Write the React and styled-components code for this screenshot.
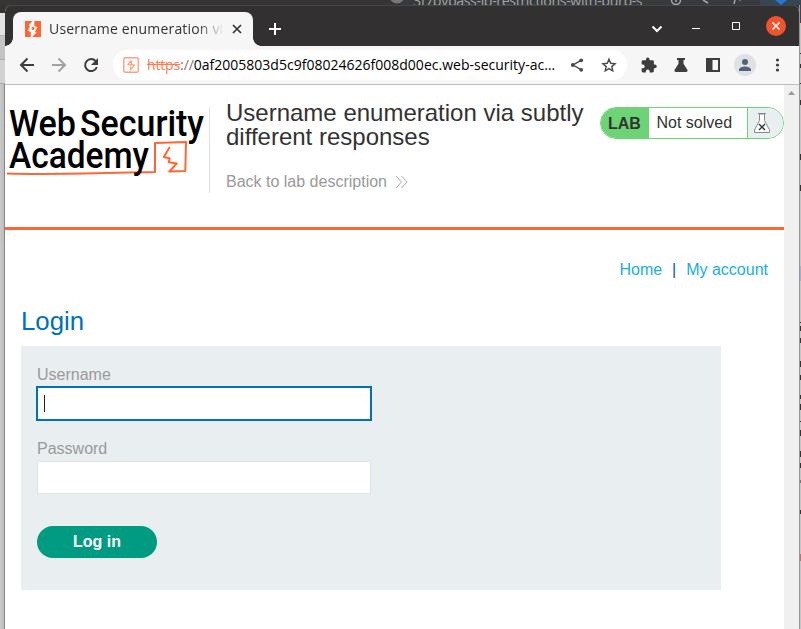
import React from "react";
import styled, { createGlobalStyle } from "styled-components";

const Global = createGlobalStyle`
  * { box-sizing: border-box; }
  body { margin: 0; overflow: hidden; font-family: "Liberation Sans", Arial, sans-serif; }
  svg { display: block; flex: none; }
  a { text-decoration: none; color: inherit; }
`;

const Desktop = styled.div`
  width: 801px;
  height: 629px;
  display: grid;
  grid-template: 5px 624px / 5px 794px 2px;
  overflow: hidden;
  background: #343434;
`;
const BackTop = styled.div`
  grid-column: 1 / 4;
  height: 5px;
  overflow: hidden;
  display: flex;
  justify-content: flex-end;
  background: linear-gradient(90deg, #363534 0 400px, #373a3c 400px 760px, #354852 760px);
`;
const BackAddress = styled.div`
  width: 388px;
  margin-top: -9px;
  font: 14.2px/20px "Open Sans", sans-serif;
  letter-spacing: -0.38px;
  color: #a0a5a8;
  white-space: nowrap;
  height: 16px;
`;
const BackIcons = styled.div`
  position: absolute;
  left: 388px;
  top: 0;
`;
const LeftEdge = styled.div`
  background: linear-gradient(#343332 0 8px, #e2e2e2 8px 30px, #b5b5b5 30px 31px, #c4c4c4 31px 54px, #adadad 54px 55px, #d2d2d2 55px 78px, #aaa 78px 79px, transparent 79px),
    linear-gradient(90deg, #c9c9c9 0, #bdbdbd 4px, #868686 4px 5px);
`;
const RightEdge = styled.div`
  position: relative;
  overflow: hidden;
  border-left: 1px solid #969696;
  background: linear-gradient(#38474f 0 18px, #c6c6c6 18px 261px, #9cb1cc 261px 276px, #c6c6c6 276px);
`;
const EdgeMark = styled.i`
  position: absolute;
  left: 0;
  width: 1px;
  height: ${(p) => p.$h}px;
  top: ${(p) => p.$y}px;
  background: ${(p) => p.$c || "#333"};
`;
const Window = styled.div`
  display: flex;
  flex-direction: column;
  overflow: hidden;
  border-radius: 7px 7px 0 0;
  background: #fff;
`;
const TitleBar = styled.div`
  height: 41px;
  flex: none;
  display: flex;
  padding: 7px 0 0 8px;
  background: #323030;
  box-shadow: inset 0 1px #484645;
`;
const Tab = styled.div`
  position: relative;
  width: 240px;
  height: 34px;
  padding: 0 11px 0 12px;
  display: flex;
  align-items: center;
  border-radius: 8px 8px 0 0;
  background: #f6f6f6;
  &::before, &::after {
    content: "";
    position: absolute;
    bottom: 0;
    width: 8px;
    height: 8px;
  }
  &::before { left: -8px; background: radial-gradient(circle at 0 0, transparent 7.5px, #f6f6f6 8px); }
  &::after { right: -8px; background: radial-gradient(circle at 100% 0, transparent 7.5px, #f6f6f6 8px); }
`;
const TabTitle = styled.div`
  width: 175px;
  margin: 0 8px 0 8px;
  overflow: hidden;
  white-space: nowrap;
  font: 14px/20px "Open Sans", sans-serif;
  letter-spacing: 0.17px;
  color: #333;
  mask-image: linear-gradient(90deg, #000 148px, transparent 175px);
`;
const NewTab = styled.div`
  padding: 10px 0 0 15px;
`;
const WindowControls = styled.div`
  margin-left: auto;
  height: 30px;
  padding-right: 13px;
`;
const Toolbar = styled.div`
  height: 39px;
  flex: none;
  display: flex;
  align-items: center;
  background: #f6f6f6;
  border-bottom: 1px solid #bdbdbd;
`;
const NavIcons = styled.div`
  width: 108px;
`;
const AddressBar = styled.div`
  width: 514px;
  height: 30px;
  display: flex;
  align-items: center;
  padding-left: 10px;
  border-radius: 15px;
  background: #fff;
`;
const Url = styled.div`
  width: 429px;
  padding-left: 8px;
  font: 14px/20px "Open Sans", sans-serif;
  letter-spacing: 0.01px;
  color: #000;
  white-space: nowrap;
`;
const Scheme = styled.span`
  color: #ff7a4d;
  letter-spacing: -0.15px;
  text-decoration: line-through;
`;
const Slashes = styled.span`
  color: #777;
  letter-spacing: -0.1px;
`;
const Viewport = styled.div`
  flex: 1;
  display: flex;
`;
const Page = styled.main`
  width: 779px;
`;
const Scrollbar = styled.div`
  width: 15px;
  padding: 5px 0 0 3px;
  background: #f0f0f0;
`;
const Header = styled.header`
  height: 145px;
  padding-top: 22px;
  display: flex;
  align-items: flex-start;
  border-bottom: 3px solid #ff6633;
`;
const LogoCell = styled.div`
  width: 205px;
  height: 86px;
  border-right: 1px solid #e1e1e1;
`;
const Heading = styled.div`
  width: 390px;
  padding: 0 0 0 16px;
  margin-top: -6px;
`;
const Title = styled.h2`
  margin: 0;
  font-size: 24px;
  line-height: 24px;
  font-weight: 400;
  color: #333332;
  white-space: nowrap;
`;
const BackLink = styled.a`
  display: flex;
  align-items: center;
  gap: 8px;
  margin-top: 23px;
  font-size: 16px;
  line-height: 20px;
  color: #999;
`;
const LabStatus = styled.div`
  width: 184px;
  height: 32px;
  display: flex;
  overflow: hidden;
  border: 1px solid #6dd377;
  border-radius: 16px;
  font-size: 16px;
  line-height: 30px;
  color: #333332;
`;
const LabTag = styled.b`
  width: 48px;
  padding: 1px 0 0 7px;
  background: #6dd377;
`;
const LabText = styled.span`
  width: 99px;
  padding-left: 7.5px;
  border-right: 1px solid #6dd377;
`;
const LabIcon = styled.span`
  flex: 1;
  padding: 4px 0 0 5px;
  background: #e9eef1;
`;
const TopLinks = styled.nav`
  display: flex;
  justify-content: flex-end;
  padding: 30px 16px 0 0;
  font-size: 16px;
  line-height: 20px;
  color: #19ade4;
`;
const Divider = styled.span`
  width: 24px;
  text-align: center;
  color: #00609d;
`;
const LoginTitle = styled.h1`
  margin: 26px 0 10px 16px;
  font-size: 25.8px;
  line-height: 30px;
  font-weight: 400;
  color: #0071b8;
`;
const Form = styled.form`
  width: 700px;
  height: 244px;
  margin-left: 16px;
  padding: 18px 16px 0;
  background: #e9eef1;
`;
const Label = styled.label`
  display: block;
  height: 23px;
  padding-top: 1px;
  font-size: 16px;
  line-height: 20px;
  color: #9a9a9a;
`;
const Field = styled.div`
  width: 334px;
  height: 33px;
  margin-bottom: ${(p) => p.$gap}px;
  padding: 7px 0 0 7px;
  background: #fff;
  border: 1px solid ${(p) => (p.$focused ? "#0071b8" : "#dfe3e5")};
  box-shadow: ${(p) => (p.$focused ? "0 0 0 1px #0071b8" : "none")};
`;
const Caret = styled.div`
  width: 1px;
  height: 17px;
  margin-left: -1px;
  background: #222;
`;
const LoginButton = styled.button`
  width: 120px;
  height: 32px;
  padding: 0;
  border: 0;
  border-radius: 16px;
  background: #009b80;
  color: #fff;
  font: bold 16px/32px "Liberation Sans", Arial, sans-serif;
`;

const Favicon = () => (
  <svg width="16" height="16" viewBox="0 0 16 16">
    <path fill="#ff6633" d="M0 0h16v16H0z" />
    <path fill="#fff" d="M7.500 0h1.800v4.800l3 1.500-2.300 4.500 1.500.5L7.200 16H5.800V11L3 9.700l2-4.700-1.300-.5z" />
    <path fill="#ff6633" d="M7.600 5.600 6.300 8l2.200 1.200 1.400-2.300z" />
  </svg>
);

const SiteBadge = () => (
  <svg width="16" height="16" viewBox="0 0 16 16" fill="none" stroke="#ff9d7d">
    <rect x=".7" y=".7" width="14.600" height="14.600" rx="1.500" strokeWidth="1.400" />
    <path d="M8.300 3.500 5 7.600l3.400.8M8.300 3.500V7l3 1.200-3.600 4.500V9.500" strokeWidth="1.200" />
  </svg>
);

const Navigation = () => (
  <svg width="108" height="38" fill="none" stroke="#3d3d3d" strokeWidth="2">
    <path d="M29 19H17M22.500 12.500 16 19l6.500 6.500" />
    <path stroke="#a3a3a3" d="M47 19h12M53.500 12.500 60 19l-6.500 6.500" />
    <path d="M90.700 15.200A6 6 0 1 0 91.800 21" />
    <path fill="#3d3d3d" stroke="none" d="M93 12v7h-7z" />
  </svg>
);

const OmniboxIcons = () => (
  <svg width="59" height="30" fill="none" stroke="#4a4a4a">
    <path d="m5 14.800 8-4.500M5 15l8 4.700" strokeWidth="1.400" />
    <g fill="#4a4a4a" stroke="none">
      <circle cx="4.800" cy="15" r="1.900" /><circle cx="13.200" cy="10.300" r="1.900" /><circle cx="13.200" cy="19.800" r="1.900" />
    </g>
    <path strokeWidth="1.400" d="m41 9.200 1.700 4.100 4.400.4-3.300 2.900 1 4.300-3.800-2.300-3.800 2.300 1-4.300-3.300-2.900 4.400-.4z" />
  </svg>
);

const ToolbarIcons = () => (
  <svg width="167" height="38" viewBox="0 0 167 38" fill="#3d3d3d">
    <path transform="translate(13.200 10.700) scale(.72)" d="M20.500 11H19V7a2 2 0 0 0-2-2h-4V3.500a2.500 2.500 0 0 0-5 0V5H4a2 2 0 0 0-2 2v3.800h1.500a2.700 2.700 0 0 1 0 5.400H2V20a2 2 0 0 0 2 2h3.800v-1.500a2.700 2.700 0 0 1 5.400 0V22H17a2 2 0 0 0 2-2v-4h1.500a2.500 2.500 0 0 0 0-5z" />
    <path d="M50 12h8v2h-1.500v3.700l4 6.300q.6 2-1.500 2H49q-2.100 0-1.500-2l4-6.300V14H50z" />
    <path fillRule="evenodd" d="M79 12h14v14H79zm6.500 2v10H91V14z" />
    <circle cx="118" cy="19" r="11" fill="#dee1e6" />
    <g fill="#53627a"><circle cx="118" cy="16" r="3" /><path d="M112 25v-1.300c0-2.400 4-3.300 6-3.300s6 .9 6 3.300V25z" /></g>
    <circle cx="150.500" cy="14" r="1.600" /><circle cx="150.500" cy="19" r="1.600" /><circle cx="150.500" cy="24" r="1.600" />
  </svg>
);

const Controls = () => (
  <svg width="136" height="30" fill="none" stroke="#fff">
    <path d="m2.500 14.500 4.500 4.500 4.500-4.500" strokeWidth="2" />
    <path d="M42 16.500h8M82.500 10.500h7v7h-7z" />
    <circle cx="126" cy="14" r="10" fill="#f0542c" stroke="none" />
    <path d="m122.500 10.500 7 7m0-7-7 7" strokeWidth="1.500" />
  </svg>
);

const Logo = () => (
  <svg width="203" height="74" viewBox="0 0 203 74">
    <g fill="none" stroke="#ff6633" strokeWidth="2" strokeLinejoin="round">
      <path d="M2 66.500c45 1.500 95-.5 148-1.500V36l31-1-.7 29-16 .5 7.500-8-8-1.200.8-4-5.800-1.300 6-10" />
    </g>
    <g fontFamily="Roboto, sans-serif" fontSize="37" fontWeight="500">
      <text x="4" y="28.500" textLength="67" lengthAdjust="spacingAndGlyphs">Web</text>
      <text x="75" y="28.500" textLength="124" lengthAdjust="spacingAndGlyphs">Security</text>
      <text x="4" y="61" textLength="140" lengthAdjust="spacingAndGlyphs">Academy</text>
    </g>
  </svg>
);

const marks = [[48, 1], [59, 4], [78, 1], [95, 5], [149, 6], [180, 6], [317, 1], [321, 5], [333, 5], [356, 6], [370, 5], [390, 4], [399, 6], [416, 1], [425, 6], [446, 6], [458, 5], [475, 3, "#777"], [505, 4], [549, 7, "#ba7560"]];

export default function App() {
  return (
    <>
      <Global />
      <Desktop>
        <BackTop>
          <BackIcons>
            <svg width="413" height="5">
              <circle cx="9" cy="-4" r="7.500" fill="#777" />
              <g fill="none" stroke="#a4a8aa" strokeWidth="1.500"><circle cx="288" cy="0" r="4.500" /><path d="M288-3v5M315 0l5 3M346 4l1-4m4 0 4-1" /></g>
              <path d="M387 0h12l-6 5z" fill="#2b75d5" />
            </svg>
          </BackIcons>
          <BackAddress>3f7bypass-ip-restrictions-with-burp-s</BackAddress>
        </BackTop>
        <LeftEdge />
        <Window>
          <TitleBar>
            <Tab>
              <Favicon />
              <TabTitle>Username enumeration via subtly</TabTitle>
              <svg width="10" height="10" stroke="#333" strokeWidth="1.700"><path d="m1 1 8 8m0-8-8 8" /></svg>
            </Tab>
            <NewTab>
              <svg width="14" height="14" stroke="#fff" strokeWidth="2"><path d="M1 7h12M7 1v12" /></svg>
            </NewTab>
            <WindowControls><Controls /></WindowControls>
          </TitleBar>
          <Toolbar>
            <NavIcons><Navigation /></NavIcons>
            <AddressBar>
              <SiteBadge />
              <Url><Scheme>https</Scheme><Slashes>://</Slashes>0af2005803d5c9f08024626f008d00ec.web-security-ac…</Url>
              <OmniboxIcons />
            </AddressBar>
            <ToolbarIcons />
          </Toolbar>
          <Viewport>
            <Page>
              <Header>
                <LogoCell><Logo /></LogoCell>
                <Heading>
                  <Title>Username enumeration via subtly<br />different responses</Title>
                  <BackLink href="#">
                    Back to lab description
                    <svg width="13" height="15" fill="none" stroke="#aaa"><path d="m1 1 5.500 6L1 13M6.500 1l5.500 6-5.500 6" /></svg>
                  </BackLink>
                </Heading>
                <LabStatus>
                  <LabTag>LAB</LabTag>
                  <LabText>Not solved</LabText>
                  <LabIcon>
                    <svg width="18" height="22" fill="none" stroke="#888">
                      <path fill="#fff" d="M6.500 2v6.500L1.500 18v2.500h15V18l-5-9.500V2z" />
                      <path d="M5 1.500h8" /><path d="m6 12 6 6m0-6-6 6" stroke="#333" strokeWidth="1.400" />
                    </svg>
                  </LabIcon>
                </LabStatus>
              </Header>
              <TopLinks><a href="#">Home</a><Divider>|</Divider><a href="#">My account</a></TopLinks>
              <LoginTitle>Login</LoginTitle>
              <Form>
                <Label>Username</Label>
                <Field $focused $gap={18}><Caret /></Field>
                <Label>Password</Label>
                <Field $gap={32} />
                <LoginButton type="button">Log in</LoginButton>
              </Form>
            </Page>
            <Scrollbar><svg width="9" height="6"><path d="m1 5 3.500-4L8 5z" fill="#999" /></svg></Scrollbar>
          </Viewport>
        </Window>
        <RightEdge>{marks.map(([y, h, c]) => <EdgeMark key={y} $y={y} $h={h} $c={c} />)}</RightEdge>
      </Desktop>
    </>
  );
}
